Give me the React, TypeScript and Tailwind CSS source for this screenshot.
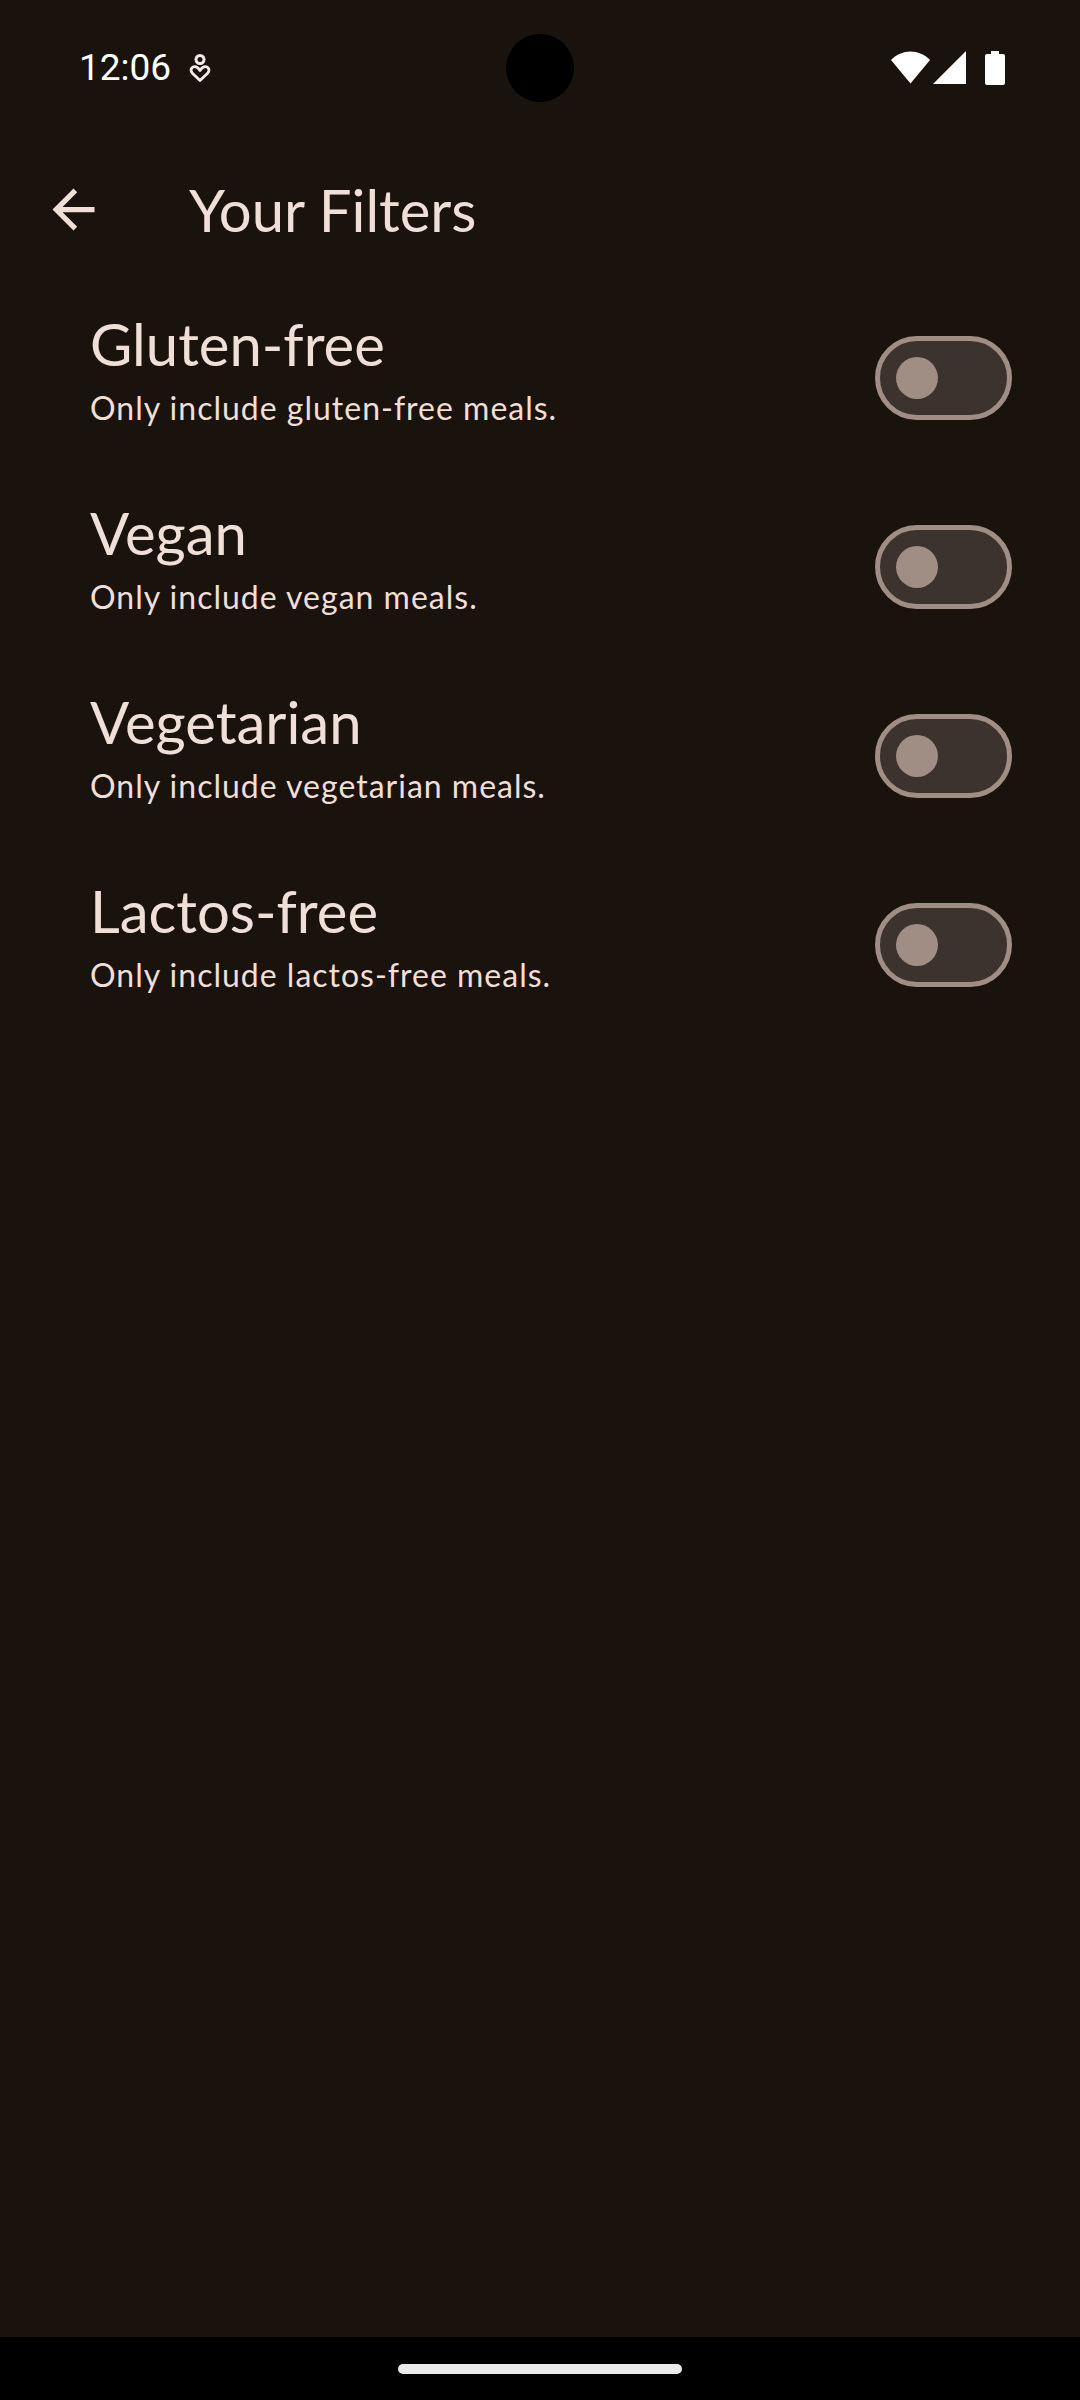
import { useId, useState } from "react";

const filters = [
  { title: "Gluten-free", subtitle: "Only include gluten-free meals." },
  { title: "Vegan", subtitle: "Only include vegan meals." },
  { title: "Vegetarian", subtitle: "Only include vegetarian meals." },
  { title: "Lactos-free", subtitle: "Only include lactos-free meals." },
];

function StatusBar() {
  return (
    <div className="relative flex h-[136px] items-center justify-between pr-[74px] pl-[79px] text-white">
      <div className="flex items-center gap-[18px]">
        <time className="font-['Roboto',sans-serif] text-[37px] leading-[44px]">12:06</time>
        <svg className="h-[30px] w-[22px]" viewBox="0 0 22 30" fill="none" stroke="#f1ece9" strokeWidth="3" aria-hidden="true">
          <circle cx="11" cy="6.5" r="4" />
          <path
            d="M11 27.5 L3.4 20.2 C.6 17 2.8 13.6 5.8 13.6 C8.2 13.6 9.4 15 11 17.6 C12.6 15 13.8 13.6 16.2 13.6 C19.2 13.6 21.4 17 18.6 20.2 Z"
            strokeWidth="2.8"
            strokeLinejoin="round"
          />
        </svg>
      </div>
      <div className="absolute top-[34px] left-1/2 size-[68px] -translate-x-1/2 rounded-full bg-black" />
      <svg className="h-[36px] w-[116px]" viewBox="0 0 116 36" fill="currentColor" aria-hidden="true">
        <path d="M1 10 C12 -1.5 29 -1.5 40 10 L20.5 33.5 Z" />
        <path d="M43 34 L76 1 V34 Z" />
        <path d="M101 1 H109 V4 H113 Q115 4 115 6 V33 Q115 35 113 35 H97 Q95 35 95 33 V6 Q95 4 97 4 H101 Z" />
      </svg>
    </div>
  );
}

function AppBar() {
  return (
    <header className="flex h-[147px] items-center gap-[84px] pl-[42px]">
      <button type="button" aria-label="Back">
        <svg className="size-[63px]" viewBox="0 0 24 24" fill="currentColor" aria-hidden="true">
          <path d="M20 11H7.83l5.59-5.59L12 4l-8 8 8 8 1.41-1.41L7.83 13H20v-2z" />
        </svg>
      </button>
      <h1 className="text-[58px] leading-[74px]">Your Filters</h1>
    </header>
  );
}

function FilterRow({ title, subtitle }: { title: string; subtitle: string }) {
  const id = useId();
  const [on, setOn] = useState(false);
  return (
    <li className="flex min-h-[189px] items-center justify-between pr-[68px] pl-[90px]">
      <label htmlFor={id} className="flex grow flex-col gap-1.5 pt-6 pb-[43px]">
        <span className="text-[58px] leading-[74px]">{title}</span>
        <span className="text-[32px] leading-[42px] tracking-[1px]">{subtitle}</span>
      </label>
      <input
        id={id}
        type="checkbox"
        role="switch"
        checked={on}
        onChange={(e) => setOn(e.target.checked)}
        className="flex h-[84px] w-[137px] shrink-0 appearance-none items-center rounded-full border-[5px] border-[#a08d84] bg-[#3c332e] px-4 before:size-[42px] before:rounded-full before:bg-[#a08d84] before:content-[''] checked:justify-end"
      />
    </li>
  );
}

export default function App() {
  return (
    <div className="flex min-h-screen flex-col bg-[#1a120d] font-['Lato',sans-serif] text-[#f0dfd7]">
      <StatusBar />
      <AppBar />
      <main className="grow">
        <ul>
          {filters.map((f) => (
            <FilterRow key={f.title} title={f.title} subtitle={f.subtitle} />
          ))}
        </ul>
      </main>
      <footer className="flex h-[63px] items-center justify-center bg-black">
        <div className="h-2.5 w-[284px] rounded-full bg-[#ebebeb]" />
      </footer>
    </div>
  );
}
